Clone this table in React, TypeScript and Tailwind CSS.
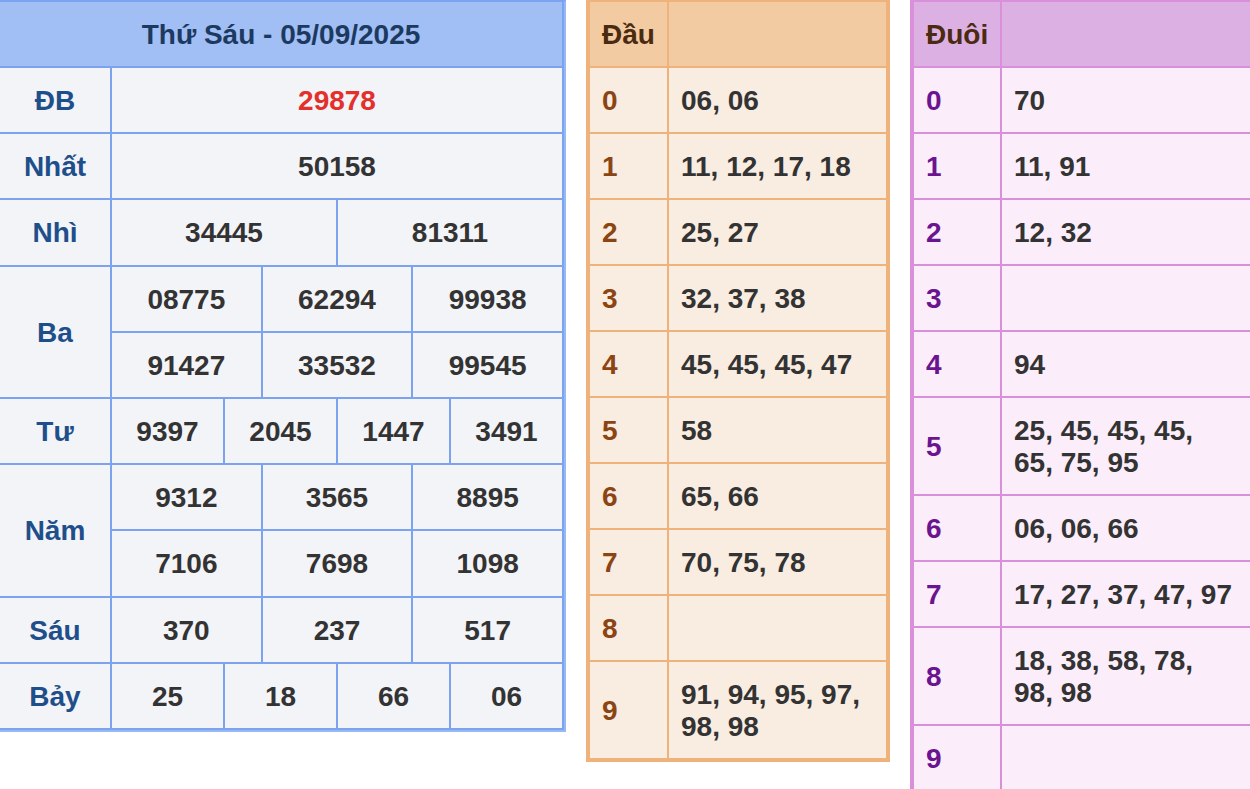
const mainRows: { label: string; rows: string[][]; red?: boolean }[] = [
  { label: "ĐB", rows: [["29878"]], red: true },
  { label: "Nhất", rows: [["50158"]] },
  { label: "Nhì", rows: [["34445", "81311"]] },
  { label: "Ba", rows: [["08775", "62294", "99938"], ["91427", "33532", "99545"]] },
  { label: "Tư", rows: [["9397", "2045", "1447", "3491"]] },
  { label: "Năm", rows: [["9312", "3565", "8895"], ["7106", "7698", "1098"]] },
  { label: "Sáu", rows: [["370", "237", "517"]] },
  { label: "Bảy", rows: [["25", "18", "66", "06"]] },
];

const dau = [
  "06, 06",
  "11, 12, 17, 18",
  "25, 27",
  "32, 37, 38",
  "45, 45, 45, 47",
  "58",
  "65, 66",
  "70, 75, 78",
  "",
  "91, 94, 95, 97, 98, 98",
];

const duoi = [
  "70",
  "11, 91",
  "12, 32",
  "",
  "94",
  "25, 45, 45, 45, 65, 75, 95",
  "06, 06, 66",
  "17, 27, 37, 47, 97",
  "18, 38, 58, 78, 98, 98",
  "",
];

const span: Record<number, string> = {
  1: "col-span-12",
  2: "col-span-6",
  3: "col-span-4",
  4: "col-span-3",
};

function MainTable() {
  return (
    <div className="w-[566px] shrink-0 border-t-2 border-r-2 border-b-2 border-t-[#7ba3ef] border-r-[#98b8f4] border-b-[#98b8f4]">
      <div className="grid grid-cols-[112px_repeat(12,minmax(0,1fr))] grid-rows-[66px] auto-rows-[66.2px] bg-[#f3f4f8]">
        <div className="col-span-13 flex items-center justify-center border-r-2 border-b-2 border-[#7ba3ef] bg-[#a1bef5] pt-[2px] text-[#1c3a60]">
          Thứ Sáu - 05/09/2025
        </div>
        {mainRows.map((g) => (
          <>
            <div
              key={g.label}
              className={`flex items-center justify-center border-r-2 border-b-2 border-[#7ba3ef] pt-[2px] text-[#1f4f8a] ${
                g.rows.length === 2 ? "row-span-2" : ""
              }`}
            >
              {g.label}
            </div>
            {g.rows.map((r, ri) =>
              r.map((n, ni) => (
                <div
                  key={g.label + ri + ni}
                  className={`${span[r.length]} flex items-center justify-center border-r-2 border-b-2 border-[#7ba3ef] pt-[2px] ${
                    g.red ? "text-[#e3302a]" : "text-[#333333]"
                  }`}
                >
                  {n}
                </div>
              ))
            )}
          </>
        ))}
      </div>
    </div>
  );
}

function LotoTable({
  title,
  items,
  firstW,
  secondW,
  border,
  head,
  body,
  digit,
}: {
  title: string;
  items: string[];
  firstW: string;
  secondW: string;
  border: string;
  head: string;
  body: string;
  digit: string;
}) {
  return (
    <div className={`shrink-0 border-x-4 border-t-2 border-b-4 ${border} ${body}`}>
      <div className={`flex h-[66px] border-b-2 ${border} ${head}`}>
        <div className={`${firstW} flex items-center border-r-2 px-3 pt-[2px] ${border} text-[#4a2a10]`}>
          {title}
        </div>
        <div className={secondW} />
      </div>
      {items.map((v, i) => (
        <div
          key={i}
          className={`flex ${i < items.length - 1 ? "border-b-2" : ""} ${border}`}
        >
          <div className={`${firstW} flex items-center border-r-2 px-3 pt-[2px] ${border} ${digit}`}>
            {i}
          </div>
          <div className={`${secondW} px-3 pt-[17px] pb-[15px] text-[#333333]`}>
            <span className="block min-h-[32px]">{v}</span>
          </div>
        </div>
      ))}
    </div>
  );
}

export default function App() {
  return (
    <div className="h-[789px] w-[1250px] overflow-hidden bg-white font-['Liberation_Sans',Arial,sans-serif] text-[28px] leading-[32px] font-bold">
      <div className="flex items-start gap-5">
        <MainTable />
        <LotoTable
          title="Đầu"
          items={dau}
          firstW="w-[79px]"
          secondW="w-[217px]"
          border="border-[#efb27a]"
          head="bg-[#f2cba3]"
          body="bg-[#f9ece1]"
          digit="text-[#8b4513]"
        />
        <LotoTable
          title="Đuôi"
          items={duoi}
          firstW="w-[88px]"
          secondW="w-[248px]"
          border="border-[#da8fda]"
          head="bg-[#ddb0e3]"
          body="bg-[#fbeefa]"
          digit="text-[#6b1490]"
        />
      </div>
    </div>
  );
}
